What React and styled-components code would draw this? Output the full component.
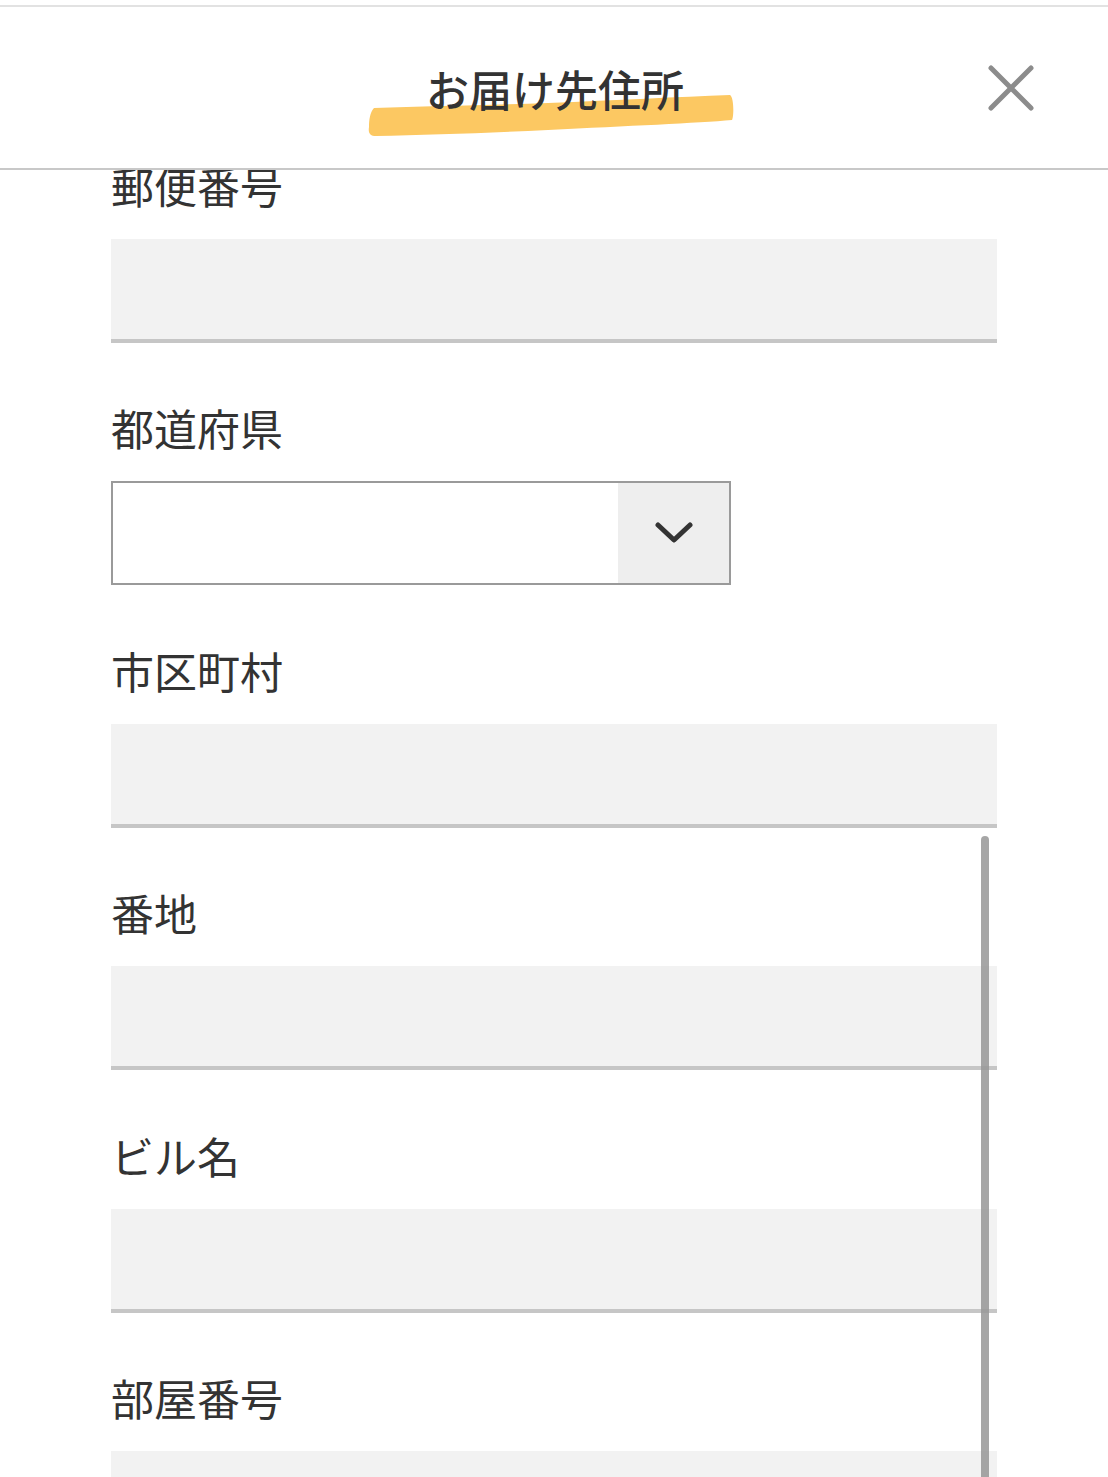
import React from "react";
import styled, { createGlobalStyle } from "styled-components";

const GlobalStyle = createGlobalStyle`
  html, body {
    margin: 0;
    padding: 0;
    background: #ffffff;
  }
  body {
    font-family: "Noto Sans CJK JP", "Noto Sans", sans-serif;
    color: #333333;
  }
`;

const fields = [
  { label: "郵便番号" },
  { label: "都道府県", select: true },
  { label: "市区町村" },
  { label: "番地" },
  { label: "ビル名" },
  { label: "部屋番号" },
];

const App = () => {
  return (
    <>
      <GlobalStyle />
      <Sheet>
        <Header>
          <span />
          <TitleWrap>
            <Brush viewBox="0 0 366 44" preserveAspectRatio="none">
              <path
                d="M6 15 C60 13 120 12 180 10 C250 7 310 4 362 2 C366 4 366 24 364 27 C330 30 260 33 180 37 C120 40 60 42 8 43 C2 43 0 40 1 34 C1 27 2 19 6 15 Z"
                fill="#fcc862"
              />
            </Brush>
            <Title>お届け先住所</Title>
          </TitleWrap>
          <CloseButton aria-label="閉じる">
            <svg width="46" height="46" viewBox="0 0 46 46">
              <path
                d="M3 3 L43 43 M43 3 L3 43"
                stroke="#8c8c8c"
                strokeWidth="5"
                strokeLinecap="round"
              />
            </svg>
          </CloseButton>
        </Header>
        <Body>
          <FieldList>
            {fields.map((f) => (
              <Field key={f.label}>
                <Label>{f.label}</Label>
                {f.select ? (
                  <SelectBox>
                    <SelectValue />
                    <SelectArrow>
                      <svg width="38" height="22" viewBox="0 0 38 22">
                        <path
                          d="M3 3 L19 18 L35 3"
                          stroke="#333"
                          strokeWidth="5"
                          fill="none"
                          strokeLinecap="round"
                          strokeLinejoin="round"
                        />
                      </svg>
                    </SelectArrow>
                  </SelectBox>
                ) : (
                  <TextInput type="text" />
                )}
              </Field>
            ))}
          </FieldList>
          <ScrollThumb />
        </Body>
      </Sheet>
    </>
  );
};

const Sheet = styled.div`
  height: 1477px;
  display: flex;
  flex-direction: column;
  overflow: hidden;
  padding-top: 5px;
  box-sizing: border-box;
`;

const Header = styled.header`
  flex: none;
  height: 161px;
  display: grid;
  grid-template-columns: 1fr auto 1fr;
  align-items: center;
  border-top: 2px solid #e2e2e2;
  border-bottom: 2px solid #c8c8c8;
  background: #ffffff;
  position: relative;
  z-index: 2;
`;

const TitleWrap = styled.div`
  position: relative;
  margin-left: 2px;
`;

const Title = styled.h1`
  position: relative;
  margin: 0;
  font-size: 43px;
  font-weight: 500;
  line-height: 60px;
  color: #333333;
  letter-spacing: 0;
`;

const Brush = styled.svg`
  position: absolute;
  left: -58px;
  top: 35px;
  width: 366px;
  height: 44px;
`;

const CloseButton = styled.button`
  justify-self: end;
  margin-right: 74px;
  padding: 0;
  border: none;
  background: none;
  display: flex;
  cursor: pointer;
`;

const Body = styled.main`
  flex: 1;
  position: relative;
  overflow: hidden;
`;

const FieldList = styled.div`
  margin-top: -13px;
  padding: 0 111px;
  display: flex;
  flex-direction: column;
  gap: 56.4px;
`;

const Field = styled.div`
  display: flex;
  flex-direction: column;
  align-items: flex-start;
  gap: 26px;
`;

const Label = styled.label`
  font-size: 43px;
  line-height: 56px;
  color: #333333;
  font-weight: 400;
`;

const TextInput = styled.input`
  box-sizing: border-box;
  width: 100%;
  height: 104px;
  margin: 0;
  border: none;
  border-bottom: 4px solid #c6c6c6;
  background: #f2f2f2;
  font-size: 36px;
  padding: 0 20px;
  outline: none;
`;

const SelectBox = styled.div`
  box-sizing: border-box;
  width: 620px;
  height: 104px;
  display: flex;
  border: 2px solid #9a9a9a;
  background: #ffffff;
`;

const SelectValue = styled.div`
  flex: 1;
`;

const SelectArrow = styled.div`
  width: 111px;
  background: #eeeeee;
  display: flex;
  align-items: center;
  justify-content: center;
`;

const ScrollThumb = styled.div`
  position: absolute;
  left: 981px;
  top: 666px;
  bottom: -10px;
  width: 8px;
  border-radius: 4px;
  background: rgba(150, 150, 150, 0.85);
`;

export default App;
